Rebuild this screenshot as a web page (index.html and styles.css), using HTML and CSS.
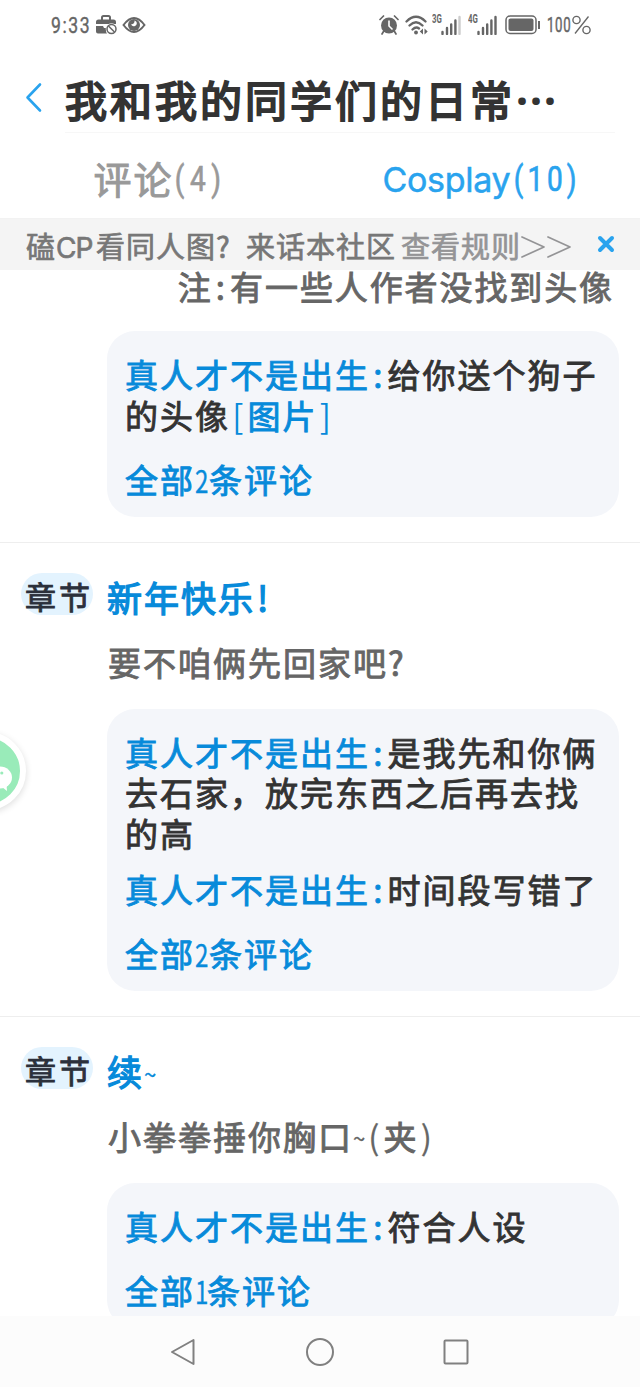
FILE: index.html
```html
<!DOCTYPE html>
<html lang="zh-CN">
<head>
<meta charset="utf-8">
<title>我和我的同学们的日常</title>
<link rel="stylesheet" href="styles.css">
</head>
<body>
<div class="screen">
  <header class="status">
    <span class="clock">9:33</span>
    <svg class="status-case" width="22" height="20" viewBox="0 0 22 20"><path d="M6 5V2.500Q6 1 7.500 1h5Q14 1 14 2.500V5" fill="none" stroke="#666" stroke-width="2"/><path d="M0 7Q0 4.500 2.500 4.500h15Q20 4.500 20 7v2H0zM0 11h7l1 2h3q-2 3 0 5.500H2q-2 0-2-2z" fill="#666"/><circle cx="15.500" cy="14" r="5.800" fill="#fff"/><circle cx="15.500" cy="14" r="4.500" fill="none" stroke="#666" stroke-width="1.500"/><path d="M12.500 11l6 6" stroke="#666" stroke-width="1.500"/></svg>
    <svg class="status-eye" width="24" height="18" viewBox="0 0 24 18"><path d="M1.500 9Q12-5 22.500 9 12 23 1.500 9z" fill="none" stroke="#666" stroke-width="2"/><circle cx="12" cy="9" r="6" fill="#666"/><path d="M12.500 4.500q.5 3.500-3.500 4 1.500 2.500 4 1.500Q15.500 8.500 14.500 6 14 5 12.500 4.500z" fill="#fff"/></svg>
    <svg class="status-alarm" width="20" height="20" viewBox="0 0 20 20"><circle cx="10" cy="10.500" r="8" fill="#666"/><path d="M10 5.500v5.500l3.500 3.500" fill="none" stroke="#fff" stroke-width="1.600"/><path d="M1 4.500L4.500 1M15.500 1L19 4.500M4.500 16.500L3 19M15.500 16.500L17 19" stroke="#666" stroke-width="1.700" stroke-linecap="round"/></svg>
    <svg class="status-wifi" width="24" height="20" viewBox="0 0 24 20"><path d="M1.500 6.500Q11-3 20.500 6.500M4.500 10.500Q11 4 17.500 10.500M7.500 14.500Q11 11 14 13.500" fill="none" stroke="#666" stroke-width="2.300" stroke-linecap="round"/><circle cx="11" cy="17.500" r="1.900" fill="#666"/><path d="M18 13.500v6L14.800 16.500zM19.500 13.500v6l3.200-3z" fill="#666"/></svg>
    <span class="net">3G</span>
    <svg class="status-bars" width="20" height="20" viewBox="0 0 20 20"><path d="M1.500 19v-2M6 19v-6M10.200 19V9.500M14.400 19V5.500" stroke="#666" stroke-width="2.400" stroke-linecap="round"/><path d="M18.500 19V2" stroke="#ccc" stroke-width="2.400" stroke-linecap="round"/></svg>
    <span class="net net-second">4G</span>
    <svg class="status-bars" width="20" height="20" viewBox="0 0 20 20"><path d="M1.500 19v-2M6 19v-6M10.200 19V9.500M14.400 19V5.500M18.500 19V2" stroke="#666" stroke-width="2.400" stroke-linecap="round"/></svg>
    <svg class="status-battery" width="36" height="20" viewBox="0 0 36 20"><rect x="1" y="1" width="30" height="17.500" rx="4" fill="none" stroke="#666" stroke-width="1.500"/><rect x="3.500" y="3.500" width="25" height="12.500" rx="2" fill="#666"/><path d="M34 6v8" stroke="#666" stroke-width="2"/></svg>
    <span class="percent">100</span>
    <svg class="status-percent" width="19" height="20" viewBox="0 0 19 20" role="img" aria-label="%"><circle cx="4.500" cy="5" r="3.600" fill="none" stroke="#666" stroke-width="1.400"/><circle cx="14.500" cy="15" r="3.600" fill="none" stroke="#666" stroke-width="1.400"/><path d="M16.500 1.500L3 18.500" stroke="#666" stroke-width="1.300"/></svg>
  </header>

  <div class="titlebar">
    <svg class="back" width="18" height="32" viewBox="0 0 18 32"><path d="M16 2.500L3.500 15.500 16 28.500" fill="none" stroke="#29a3ee" stroke-width="2.600" stroke-linecap="round" stroke-linejoin="round"/></svg>
    <h1 class="title">我和我的同学们的日常<span class="dots">⋯</span></h1>
  </div>

  <nav class="tabs">
    <div class="tab">评论<span class="paren">(4)</span></div>
    <div class="tab tab-active"><span class="tab-name">Cosplay</span><span class="paren paren-wide">(10)</span></div>
  </nav>

  <div class="notice">
    <span class="notice-text">磕<span class="cp">CP</span>看同人图<span class="q">?</span>来话本社区</span>
    <span class="notice-link">查看规则</span>
    <svg class="arrows" width="52" height="24" viewBox="0 0 52 24" role="img" aria-label=">>"><path d="M2 2l22 10L2 22M28 2l22 10-22 10" fill="none" stroke="#949496" stroke-width="1.700" stroke-linecap="round" stroke-linejoin="round"/></svg>
    <svg class="close" width="18" height="18" viewBox="0 0 18 18"><path d="M3 3l12 12M15 3L3 15" stroke="#29a3ee" stroke-width="4" stroke-linecap="round"/></svg>
  </div>

  <main class="feed">
    <section class="item item-first">
      <p class="comment comment-right">注<span class="half">:</span>有一些人作者没找到头像</p>
      <div class="card">
        <p class="reply"><b class="user">真人才不是出生<span class="half">:</span></b>给你送个狗子<br>的头像<span class="user"><span class="half bracket">[</span>图片<span class="half bracket">]</span></span></p>
        <p class="all">全部<span class="num">2</span>条评论</p>
      </div>
    </section>

    <section class="item">
      <div class="head"><span class="badge">章节</span><h2 class="chapter">新年快乐<span class="half">!</span></h2></div>
      <p class="comment">要不咱俩先回家吧<span class="half">?</span></p>
      <div class="card">
        <p class="reply"><b class="user">真人才不是出生<span class="half">:</span></b>是我先和你俩<br>去石家，放完东西之后再去找<br>的高</p>
        <p class="reply"><b class="user">真人才不是出生<span class="half">:</span></b>时间段写错了</p>
        <p class="all">全部<span class="num">2</span>条评论</p>
      </div>
    </section>

    <section class="item">
      <div class="head"><span class="badge">章节</span><h2 class="chapter">续<span class="tilde">~</span></h2></div>
      <p class="comment">小拳拳捶你胸口<span class="tilde">~</span><span class="half thin">(</span>夹<span class="half thin">)</span></p>
      <div class="card">
        <p class="reply"><b class="user">真人才不是出生<span class="half">:</span></b>符合人设</p>
        <p class="all">全部<span class="num num-one">1</span>条评论</p>
      </div>
    </section>
  </main>

  <footer class="navbar">
    <svg width="28" height="30" viewBox="0 0 28 30"><path d="M24.500 3v24L3 15z" fill="none" stroke="#808080" stroke-width="2" stroke-linejoin="round"/></svg>
    <svg width="30" height="30" viewBox="0 0 30 30"><circle cx="15" cy="15" r="13" fill="none" stroke="#808080" stroke-width="2"/></svg>
    <svg width="28" height="30" viewBox="0 0 28 30"><rect x="1.500" y="3.500" width="23" height="23" rx="1" fill="none" stroke="#808080" stroke-width="2"/></svg>
  </footer>

  <div class="fab"><svg width="30" height="34" viewBox="0 0 30 34"><ellipse cx="16" cy="16.500" rx="12" ry="11" fill="#fff"/><path d="M18 26l5 4-.5-6z" fill="#fff"/><circle cx="17.800" cy="12" r="1.600" fill="#99ebb9"/></svg></div>
</div>
</body>
</html>
```
FILE: styles.css
```css
* { box-sizing: border-box; }
body { margin: 0; background: #fff; }
h1, h2, p { margin: 0; font-weight: 400; }
b { font-weight: inherit; }
svg { flex: none; display: block; }

.screen {
  position: relative;
  display: flex;
  flex-direction: column;
  width: 640px;
  height: 1387px;
  overflow: hidden;
  background: #fff;
  font-family: "Noto Sans CJK SC", sans-serif;
  white-space: nowrap;
}

.status {
  display: flex;
  align-items: center;
  height: 48px;
  padding: 2px 0 0 51px;
  color: #666;
  font-family: Roboto, sans-serif;
}
.clock {
  width: 39px;
  font-size: 22px;
  letter-spacing: 2px;
  transform: scaleX(.8);
  transform-origin: left;
  -webkit-text-stroke: .4px;
}
.status-case { margin-left: 6px; }
.status-eye { margin-left: 4px; }
.status-alarm { margin-left: 233px; }
.status-wifi { margin-left: 6px; }
.net {
  width: 9px;
  margin: -12px 0 0 3px;
  font-size: 12px;
  font-weight: 700;
  transform: scaleX(.65);
  transform-origin: left;
}
.status-bars { margin: -1px 0 0 0; }
.net-second { margin-left: 7px; }
.status-battery { margin: -1px 0 0 8px; }
.percent {
  width: 24px;
  margin-left: 6px;
  font-size: 21px;
  letter-spacing: 1px;
  transform: scaleX(.63);
  transform-origin: left;
  -webkit-text-stroke: .5px;
}
.status-percent { margin-left: 1px; }

.titlebar {
  display: flex;
  align-items: center;
  height: 84px;
  padding: 0 0 0 24px;
}
.back { margin: 15px 23px 0 0; }
.title {
  flex: none;
  width: 550px;
  height: 85px;
  padding-top: 13px;
  border-bottom: 1px solid #f7f7f7;
  color: #333;
  font-size: 42px;
  line-height: 76px;
  letter-spacing: 3px;
  -webkit-text-stroke: 2px;
}
.dots { letter-spacing: 0; }

.tabs {
  display: grid;
  grid-template-columns: 1fr 1fr;
  height: 87px;
  border-bottom: 1px solid #f2f2f2;
  color: #999;
  font-size: 38px;
  line-height: 91px;
  -webkit-text-stroke: .9px;
}
.tab {
  display: flex;
  justify-content: center;
  padding-right: 2px;
  letter-spacing: 2px;
}
.tab-active { padding: 0; color: #29a3ee; }
.tab-name {
  width: 130px;
  font-family: Inter, sans-serif;
  font-size: 34px;
  letter-spacing: -.3px;
  line-height: 96px;
  -webkit-text-stroke: .5px;
}
.paren {
  width: 51px;
  padding-left: 1px;
  font-family: Roboto, sans-serif;
  font-size: 35px;
  letter-spacing: 7px;
  line-height: 96px;
  transform: scaleX(.8);
  transform-origin: left;
  -webkit-text-stroke: .7px;
}
.paren-wide { width: 65px; letter-spacing: 5px; }

.notice {
  display: flex;
  align-items: center;
  height: 51px;
  padding-left: 26px;
  background: #f4f4f4;
  color: #777;
  font-size: 29px;
  line-height: 54px;
  letter-spacing: 1px;
  -webkit-text-stroke: .7px;
}
.notice-text { width: 375px; }
.cp {
  display: inline-block;
  width: 40px;
  font-family: Inter, sans-serif;
  font-size: 28px;
  line-height: 1;
  letter-spacing: -1px;
}
.q { display: inline-block; width: 30px; line-height: 1; }
.notice-link { width: 119px; color: #949496; }
.arrows { margin-top: 4px; }
.close { margin: -1px 0 0 25px; }

.feed {
  height: 1046px;
  overflow: hidden;
  color: #333;
  font-size: 33px;
  line-height: 40.5px;
  letter-spacing: 2px;
  -webkit-text-stroke: .9px;
}
.item {
  padding: 34.5px 21px 25px 21px;
  border-bottom: 1px solid #eee;
}
.item-first { padding-top: 0; }
.head { display: flex; align-items: center; height: 40px; }
.badge {
  width: 72px;
  height: 42px;
  margin: -6px 14px 0 0;
  padding-left: 4px;
  border-radius: 21px;
  background: #e3f3fe;
  color: #2b303b;
  font-size: 31px;
  line-height: 46px;
  letter-spacing: 3px;
}
.chapter {
  color: #078ada;
  font-size: 35px;
  -webkit-text-stroke: 1.3px;
}
.comment {
  height: 40.5px;
  margin: 24.5px 0 26.5px 87px;
  color: #666;
}
.comment-right {
  height: 61px;
  margin: 0 5px 0 0;
  line-height: 28px;
  text-align: right;
  letter-spacing: 1.9px;
}
.card {
  margin-left: 86px;
  padding: 23px 17px 17.5px 18px;
  border-radius: 28px;
  background: #f4f6fa;
}
.reply + .reply { margin-top: 15.5px; }
.user, .all { color: #078ada; }
.all { height: 40.5px; margin-top: 23.5px; }

/* Half-width punctuation sits in a fixed cell */
.half {
  display: inline-block;
  width: 17.5px;
  line-height: 1;
  text-align: center;
}
.bracket { -webkit-text-stroke: 0; }
.thin { -webkit-text-stroke: .2px; }
.num {
  display: inline-block;
  width: 14px;
  font-size: 31px;
  line-height: 1;
  letter-spacing: 0;
  transform: scaleX(.78);
  transform-origin: left;
  -webkit-text-stroke: .3px;
}
.num-one { width: 12px; }
.tilde {
  display: inline-block;
  width: 13px;
  font-size: 22px;
  line-height: 1;
  letter-spacing: 0;
  transform: translateY(-3px);
  -webkit-text-stroke: .3px;
}

.navbar {
  display: flex;
  align-items: center;
  gap: 108px;
  height: 71px;
  padding-left: 169px;
  background: #fcfcfc;
}

.fab {
  position: absolute;
  top: 732px;
  left: -52px;
  width: 78px;
  height: 78px;
  padding: 23px 0 0 30px;
  border: 6px solid #fff;
  border-radius: 50%;
  background: #99ebb9;
  box-shadow: 0 2px 7px rgba(0, 0, 0, .14);
}
```
